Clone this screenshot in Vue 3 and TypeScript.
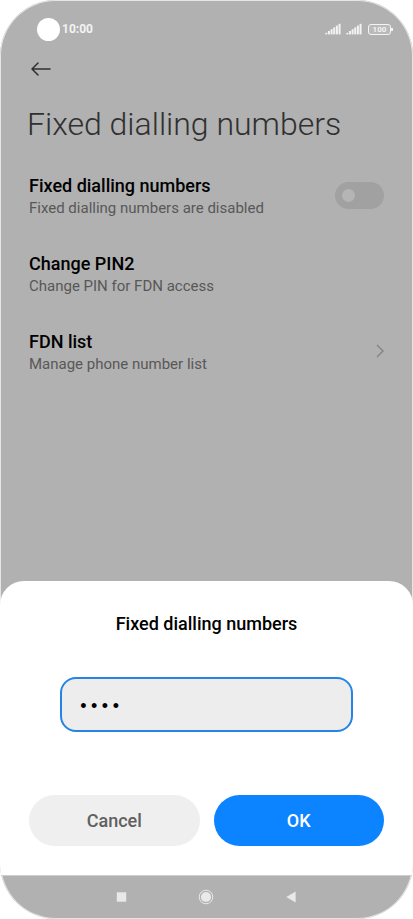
<script setup lang="ts">
import { ref } from 'vue'

const fdnEnabled = ref(false)
const pin = ref('0000')
const bars = [0, 1, 2, 3, 4, 5]
const signals = ['SIM 1', 'SIM 2']
</script>

<template>
  <div class="phone">
    <header class="status">
      <span class="camera"></span>
      <span class="clock">10:00</span>
      <span class="indicators">
        <svg v-for="name in signals" :key="name" class="signal" viewBox="0 0 16 12" role="img" :aria-label="name">
          <rect v-for="n in bars" :key="n" :x="n * 2.65 + 0.3" :y="9.8 - n * 1.8" width="2" :height="1.6 + n * 1.8" fill="currentColor" />
        </svg>
        <span class="battery">100</span>
      </span>
    </header>

    <main class="page">
      <button class="back" type="button" aria-label="Back">
        <svg viewBox="0 0 20 14" width="20" height="14" fill="none" stroke="currentColor" stroke-width="1.5" stroke-linecap="round" stroke-linejoin="round">
          <path d="M7 1 1 7l6 6M1 7h18" />
        </svg>
      </button>
      <h1>Fixed dialling numbers</h1>

      <div class="row">
        <label for="fdn" class="text">
          <span class="title">Fixed dialling numbers</span>
          <span class="note">Fixed dialling numbers are disabled</span>
        </label>
        <input id="fdn" v-model="fdnEnabled" class="switch" type="checkbox" role="switch" />
      </div>
      <button class="row" type="button">
        <span class="text">
          <span class="title">Change PIN2</span>
          <span class="note">Change PIN for FDN access</span>
        </span>
      </button>
      <button class="row" type="button">
        <span class="text">
          <span class="title">FDN list</span>
          <span class="note">Manage phone number list</span>
        </span>
        <svg class="chevron" viewBox="0 0 8 14" fill="none" stroke="currentColor" stroke-width="1.4">
          <path d="m1 1 6 6-6 6" />
        </svg>
      </button>
    </main>

    <form class="sheet" role="dialog" aria-labelledby="sheet-title" @submit.prevent>
      <h2 id="sheet-title">Fixed dialling numbers</h2>
      <input v-model="pin" class="pin" type="password" aria-labelledby="sheet-title" autocomplete="off" />
      <div class="actions">
        <button class="action" type="button">Cancel</button>
        <button class="action primary" type="submit">OK</button>
      </div>
    </form>

    <nav class="navbar">
      <button type="button" aria-label="Recent apps">
        <svg viewBox="0 0 16 16" width="16" height="16" fill="currentColor"><rect x="3.8" y="3.3" width="9.4" height="9.4" /></svg>
      </button>
      <button type="button" aria-label="Home">
        <svg viewBox="0 0 16 16" width="16" height="16" fill="currentColor">
          <circle cx="8" cy="8" r="5.1" />
          <circle cx="8" cy="8" r="6.8" fill="none" stroke="currentColor" />
        </svg>
      </button>
      <button type="button" aria-label="Back">
        <svg viewBox="0 0 16 16" width="16" height="16" fill="currentColor"><path d="M3.3 8 12.6 2.6v10.8z" /></svg>
      </button>
    </nav>
  </div>
</template>

<style>
body {
  background: #fff;
}
</style>

<style scoped>
.phone,
.phone * {
  box-sizing: border-box;
}

.phone {
  display: flex;
  flex-direction: column;
  min-height: 100vh;
  border-radius: 56px;
  overflow: hidden;
  background: #b1b1b1;
  box-shadow: inset 0 0 0 1px #e4e6e5;
  color: #000;
  font-family: Roboto, "Liberation Sans", sans-serif;
}

button {
  margin: 0;
  padding: 0;
  border: 0;
  background: none;
  color: inherit;
  font: inherit;
  text-align: left;
}

svg {
  display: block;
}

.status {
  display: flex;
  align-items: center;
  height: 58px;
  padding: 0 21px 0 37px;
  color: #f3f3f3;
}

.camera {
  width: 23px;
  height: 23px;
  border-radius: 50%;
  background: #fff;
}

.clock {
  margin-left: 2px;
  font-size: 12px;
  font-weight: 700;
}

.indicators {
  display: flex;
  align-items: center;
  gap: 5px;
  margin-left: auto;
}

.signal {
  width: 16px;
  height: 12px;
}

.battery {
  position: relative;
  width: 23px;
  height: 11px;
  margin: 0 1px;
  border: 1px solid currentColor;
  border-radius: 3px;
  background: #bababa;
  font-size: 8px;
  font-weight: 700;
  line-height: 10px;
  text-align: center;
}

.battery::after {
  content: "";
  position: absolute;
  top: 3px;
  right: -3px;
  width: 2px;
  height: 3px;
  background: currentColor;
}

.page {
  flex: 1;
  padding: 0 29px;
}

.back {
  display: block;
  margin: 4px 0 0 2px;
  color: #303030;
}

h1 {
  margin: 28px 0 0 -2px;
  color: #303030;
  font-size: 32px;
  font-weight: 300;
  line-height: 40px;
}

.row {
  display: flex;
  align-items: center;
  justify-content: space-between;
  width: 100%;
  height: 44px;
  margin-top: 29px;
}

.row + .row {
  margin-top: 34px;
}

.title {
  display: block;
  font-size: 18px;
  font-weight: 500;
  line-height: 26px;
}

.note {
  display: block;
  color: #585858;
  font-size: 15px;
  line-height: 18px;
}

.switch {
  appearance: none;
  display: flex;
  align-items: center;
  width: 49px;
  height: 27px;
  margin: 0;
  padding: 0 7px;
  border-radius: 14px;
  background: #a1a1a1;
}

.switch::before {
  content: "";
  width: 13px;
  height: 13px;
  border-radius: 50%;
  background: #b5b5b5;
}

.switch:checked {
  justify-content: flex-end;
}

.chevron {
  width: 8px;
  height: 14px;
  color: #838383;
}

.sheet {
  padding: 32px 29px 29px;
  border-radius: 24px 24px 0 0;
  background: #fff;
}

h2 {
  margin: 0;
  font-size: 18px;
  font-weight: 500;
  line-height: 22px;
  text-align: center;
}

.pin {
  display: block;
  width: calc(100% - 62px);
  height: 55px;
  margin: 42px auto 63px;
  padding: 4px 16px 0;
  border: 2px solid #2485e4;
  border-radius: 16px;
  outline: 0;
  background: #ededed;
  color: #000;
  font-family: "Liberation Mono", monospace;
  font-size: 18px;
}

.actions {
  display: flex;
  gap: 14px;
}

.action {
  flex: 1;
  height: 51px;
  border-radius: 26px;
  background: #efefef;
  color: #606060;
  font-size: 18px;
  font-weight: 500;
  text-align: center;
}

.primary {
  background: #0d84ff;
  color: #fff;
}

.navbar {
  display: flex;
  align-items: center;
  justify-content: center;
  gap: 69px;
  height: 44px;
  padding: 0 2px 2px 0;
  border-top: 1px solid #cfcfcf;
  color: #e9e9e9;
}
</style>
